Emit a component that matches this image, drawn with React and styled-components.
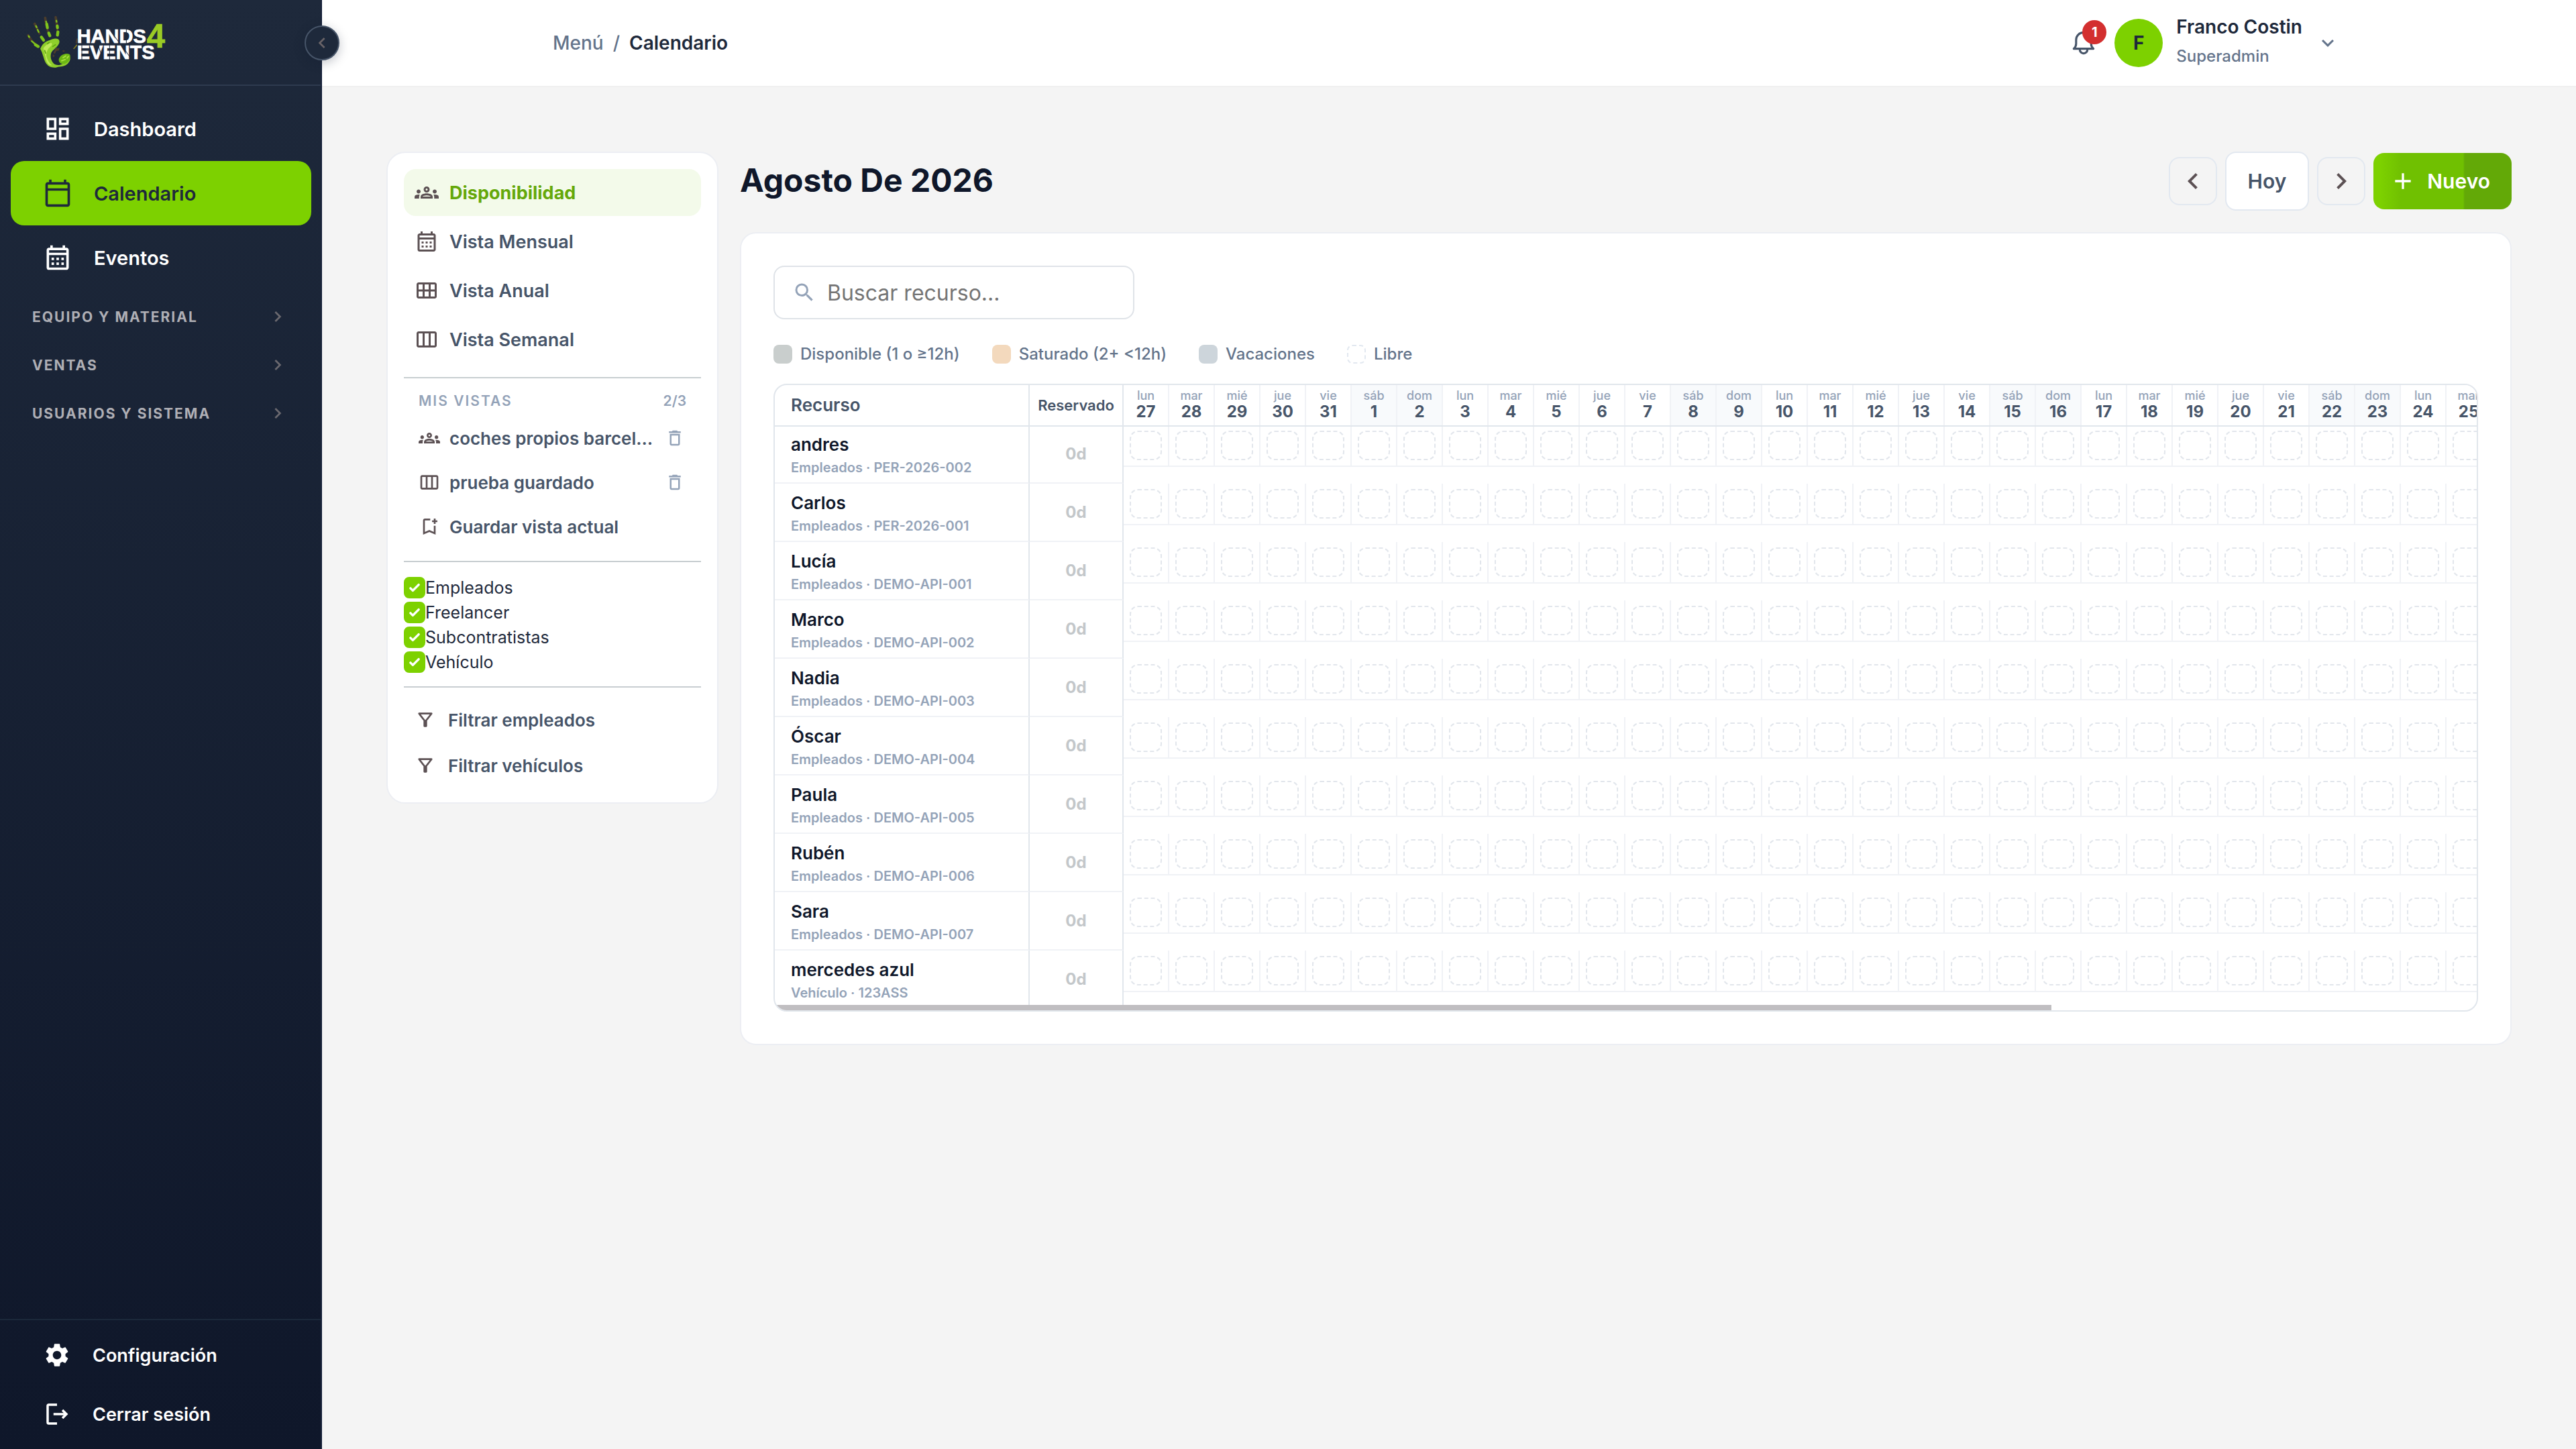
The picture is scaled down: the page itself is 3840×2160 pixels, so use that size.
import React, { useState } from 'react'
import styled, { createGlobalStyle } from 'styled-components'
import {
    MdOutlineDashboard,
    MdOutlineCalendarToday,
    MdOutlineCalendarMonth,
    MdSettings,
    MdChevronLeft,
    MdChevronRight,
    MdKeyboardArrowDown,
    MdOutlineGroups,
    MdOutlineCalendarViewMonth,
    MdOutlineViewWeek,
    MdOutlineBookmarkAdd,
    MdDeleteOutline,
    MdOutlineFilterAlt,
    MdSearch,
    MdAdd,
} from 'react-icons/md'

const mainLinks = [
    { label: 'Dashboard', icon: MdOutlineDashboard },
    { label: 'Calendario', icon: MdOutlineCalendarToday, active: true },
    { label: 'Eventos', icon: MdOutlineCalendarMonth },
]

const sections = ['Equipo y material', 'Ventas', 'Usuarios y sistema']

const views = [
    { label: 'Disponibilidad', icon: MdOutlineGroups },
    { label: 'Vista Mensual', icon: MdOutlineCalendarMonth },
    { label: 'Vista Anual', icon: MdOutlineCalendarViewMonth },
    { label: 'Vista Semanal', icon: MdOutlineViewWeek },
]

const savedViews = [
    { label: 'coches propios barcelona', icon: MdOutlineGroups },
    { label: 'prueba guardado', icon: MdOutlineViewWeek },
]

const types = ['Empleados', 'Freelancer', 'Subcontratistas', 'Vehículo']

const legend = [
    { label: 'Disponible (1 o ≥12h)', color: '#c9cecd' },
    { label: 'Saturado (2+ <12h)', color: '#f3d9bd' },
    { label: 'Vacaciones', color: '#cdd5db' },
    { label: 'Libre' },
]

const resources = [
    { name: 'andres', info: 'Empleados · PER-2026-002' },
    { name: 'Carlos', info: 'Empleados · PER-2026-001' },
    { name: 'Lucía', info: 'Empleados · DEMO-API-001' },
    { name: 'Marco', info: 'Empleados · DEMO-API-002' },
    { name: 'Nadia', info: 'Empleados · DEMO-API-003' },
    { name: 'Óscar', info: 'Empleados · DEMO-API-004' },
    { name: 'Paula', info: 'Empleados · DEMO-API-005' },
    { name: 'Rubén', info: 'Empleados · DEMO-API-006' },
    { name: 'Sara', info: 'Empleados · DEMO-API-007' },
    { name: 'mercedes azul', info: 'Vehículo · 123ASS' },
]

const weekDays = ['dom', 'lun', 'mar', 'mié', 'jue', 'vie', 'sáb']

// the grid starts on the monday before the 1st of august
const days = Array.from({ length: 30 }, (_, i) => {
    const date = new Date(2026, 6, 27 + i)
    return {
        key: i,
        name: weekDays[date.getDay()],
        number: date.getDate(),
        weekend: date.getDay() === 0 || date.getDay() === 6,
    }
})

function Logo() {
    return (
        <svg width="260" height="106" viewBox="0 0 780 318" role="img" aria-label="Hands 4 Events">
            <g fill="none" stroke="#4b3d2c" strokeLinecap="round">
                <path d="M66 128l14 22M95 76l10 20M142 50l4 22M189 47l5 32" strokeWidth="11" />
                <path d="M80 150l30 28M105 96l12 24M150 85l4 26M196 80l1 30" strokeWidth="9" />
                <path d="M285 146l-3 14" strokeWidth="8" />
            </g>
            <g fill="none" stroke="#7fc41c" strokeLinecap="round">
                <path d="M68 131l3 5M82 154l14 12M101 86l3 6M108 103l5 10M146 66l2 8M192 62l1 6" strokeWidth="7" />
                <path d="M98 170l13 8M125 136l10 14M149 78l3 16M158 118l5 12M196 86l1 8M199 113l-2 14" strokeWidth="13" />
            </g>
            <path d="M120 188c8-18 22-34 42-38 14-8 30-10 40-4 8 10 2 22-6 30-8 12-24 18-28 34-4 18 2 34 14 46 12 8 26 6 40-2 18-2 26-14 30-30 6 10-2 26-16 36-16 10-34 6-46 12-20 2-34-4-42-16-12-16-16-48-28-68z" fill="#8fce2b" />
            <path d="M134 186c10-14 22-24 36-24 8 8-4 16-12 24-10 12-14 30-8 44 6 16 14 24 22 32-14 2-22-10-26-24-4-20-8-36-12-52z" fill="#bfe85a" />
            <path d="M206 248c-8-12 0-26 16-34 14-6 30-6 32 4 2 16-8 30-22 36-10 4-20 2-26-6z" fill="#6cb714" />
            <path d="M222 228l12-8M216 242l16-6M240 230l6-8" stroke="#a9e03e" strokeWidth="6" strokeLinecap="round" />
            <path d="M152 166l8-6M176 178l12-8M140 196l4 12" stroke="#5fa50f" strokeWidth="5" strokeLinecap="round" />
            <path d="M188 182l10 4 8-2-2 12-12 2-6 12-8-2 6-12zM176 214l8 2-2 10-6-2zM220 196l10 0-2 6-8-1z" fill="#4b3d2c" />
            <path d="M267 188l16-20 2 6-14 16z" fill="#8b8320" />
            <g fontFamily="'Liberation Sans', Arial, sans-serif" fontWeight="700">
                <text x="284" y="161" fontSize="87" fill="#ffffff" stroke="#ffffff" strokeWidth="2">HANDS</text>
                <text x="284" y="235" fontSize="87" fill="#ffffff" stroke="#ffffff" strokeWidth="2">EVENTS</text>
                <text x="596" y="184" fontSize="148" fill="#9acb25" stroke="#9acb25" strokeWidth="2">4</text>
            </g>
            {/* stencil cuts */}
            <path
                d="M306 96v26M306 134v30M426 98l50 66M505 95v70M306 170v70M380 174l20 62M430 170v70M484 172l46 66M575 170v14"
                stroke="#1d293c"
                strokeWidth="3"
            />
        </svg>
    )
}

function LogoutIcon() {
    return (
        <svg width="42" height="42" viewBox="0 0 24 24" fill="none" stroke="currentColor" strokeWidth="2" aria-hidden="true">
            <path d="M12 4H5a1 1 0 0 0-1 1v14a1 1 0 0 0 1 1h7" />
            <path d="M9 12h10" />
            <path d="M16.600 8.600L20 12l-3.400 3.400" />
        </svg>
    )
}

function BellIcon() {
    return (
        <svg width="44" height="44" viewBox="0 0 24 24" fill="none" stroke="currentColor" strokeWidth="1.700" strokeLinecap="round" strokeLinejoin="round" aria-hidden="true">
            <path d="M4 16.700h16c-1.100-1-1.900-2.200-1.900-4V9.600a6.100 6.100 0 0 0-12.200 0v3.100c0 1.800-.8 3-1.900 4z" />
            <path d="M8.900 17.400a3.100 3.100 0 0 0 6.200 0" />
        </svg>
    )
}

function Sidebar() {
    return (
        <Aside>
            <Brand>
                <Logo />
                <Collapse type="button" aria-label="Contraer menú">
                    <MdChevronLeft size={32} />
                </Collapse>
            </Brand>
            <Nav>
                {mainLinks.map(({ label, icon: Icon, active }) => (
                    <NavLink key={label} href="#" $active={active}>
                        <Icon size={44} />
                        {label}
                    </NavLink>
                ))}
                <Sections>
                    {sections.map((label) => (
                        <SectionButton key={label} type="button">
                            {label}
                            <MdChevronRight size={32} />
                        </SectionButton>
                    ))}
                </Sections>
            </Nav>
            <AsideFooter>
                <FooterLink href="#">
                    <MdSettings size={42} />
                    Configuración
                </FooterLink>
                <FooterLink href="#">
                    <LogoutIcon />
                    Cerrar sesión
                </FooterLink>
            </AsideFooter>
        </Aside>
    )
}

function Header() {
    return (
        <TopBar>
            <Breadcrumb aria-label="Ruta">
                <a href="#">Menú</a>
                <span>/</span>
                <strong>Calendario</strong>
            </Breadcrumb>
            <UserArea>
                <BellButton type="button" aria-label="Notificaciones">
                    <BellIcon />
                    <Badge>1</Badge>
                </BellButton>
                <UserButton type="button">
                    <Avatar>F</Avatar>
                    <UserText>
                        <UserName>Franco Costin</UserName>
                        <UserRole>Superadmin</UserRole>
                    </UserText>
                    <MdKeyboardArrowDown size={36} />
                </UserButton>
            </UserArea>
        </TopBar>
    )
}

function ViewsPanel() {
    const [view, setView] = useState('Disponibilidad')
    const [checked, setChecked] = useState(types)

    const toggle = (type) =>
        setChecked(checked.includes(type) ? checked.filter((t) => t !== type) : [...checked, type])

    return (
        <Panel>
            <ViewList>
                {views.map(({ label, icon: Icon }) => (
                    <ViewButton key={label} type="button" $active={view === label} onClick={() => setView(label)}>
                        <Icon size={36} />
                        <span>{label}</span>
                    </ViewButton>
                ))}
            </ViewList>
            <Divider />
            <SavedHead>
                <SavedTitle>Mis vistas</SavedTitle>
                <span>2/3</span>
            </SavedHead>
            <SavedList>
                {savedViews.map(({ label, icon: Icon }) => (
                    <SavedRow key={label}>
                        <SavedButton type="button">
                            <Icon size={32} />
                            <span>{label}</span>
                        </SavedButton>
                        <DeleteButton type="button" aria-label={'Eliminar ' + label}>
                            <MdDeleteOutline size={30} />
                        </DeleteButton>
                    </SavedRow>
                ))}
                <SavedRow>
                    <SavedButton type="button">
                        <MdOutlineBookmarkAdd size={32} />
                        <span>Guardar vista actual</span>
                    </SavedButton>
                </SavedRow>
            </SavedList>
            <Divider />
            <TypeList>
                {types.map((type) => (
                    <TypeLabel key={type}>
                        <Check type="checkbox" checked={checked.includes(type)} onChange={() => toggle(type)} />
                        {type}
                    </TypeLabel>
                ))}
            </TypeList>
            <Divider />
            <FilterList>
                <FilterButton type="button">
                    <MdOutlineFilterAlt size={32} />
                    Filtrar empleados
                </FilterButton>
                <FilterButton type="button">
                    <MdOutlineFilterAlt size={32} />
                    Filtrar vehículos
                </FilterButton>
            </FilterList>
        </Panel>
    )
}

function ResourceTable() {
    return (
        <TableFrame>
            <Table>
                <colgroup>
                    <NameCol />
                    <CountCol />
                    {days.map((day) => (
                        <DayCol key={day.key} />
                    ))}
                </colgroup>
                <thead>
                    <tr>
                        <HeadCell scope="col">Recurso</HeadCell>
                        <HeadCell scope="col" $small>
                            Reservado
                        </HeadCell>
                        {days.map((day) => (
                            <DayHead key={day.key} scope="col" $weekend={day.weekend}>
                                <DayName>{day.name}</DayName>
                                <DayNumber>{day.number}</DayNumber>
                            </DayHead>
                        ))}
                    </tr>
                </thead>
                <tbody>
                    {resources.map((resource) => (
                        <tr key={resource.name}>
                            <NameCell scope="row">
                                <ResourceName>{resource.name}</ResourceName>
                                <ResourceInfo>{resource.info}</ResourceInfo>
                            </NameCell>
                            <CountCell>0d</CountCell>
                            {days.map((day) => (
                                <DayCell key={day.key}>
                                    <Slot>
                                        <FreeBox />
                                    </Slot>
                                </DayCell>
                            ))}
                        </tr>
                    ))}
                </tbody>
            </Table>
            <ScrollThumb />
        </TableFrame>
    )
}

function App() {
    return (
        <Page>
            <GlobalStyle />
            <Sidebar />
            <Main>
                <Header />
                <Content>
                    <ViewsPanel />
                    <Calendar>
                        <TitleRow>
                            <Title>Agosto De 2026</Title>
                            <Controls>
                                <ArrowButton type="button" aria-label="Anterior">
                                    <MdChevronLeft size={48} />
                                </ArrowButton>
                                <TodayButton type="button">Hoy</TodayButton>
                                <ArrowButton type="button" aria-label="Siguiente">
                                    <MdChevronRight size={48} />
                                </ArrowButton>
                                <NewButton type="button">
                                    <MdAdd size={40} />
                                    Nuevo
                                </NewButton>
                            </Controls>
                        </TitleRow>
                        <Card>
                            <SearchBox>
                                <MdSearch size={36} />
                                <input type="text" placeholder="Buscar recurso..." aria-label="Buscar recurso" />
                            </SearchBox>
                            <Legend>
                                {legend.map(({ label, color }) => (
                                    <LegendItem key={label}>
                                        <Swatch $color={color} />
                                        {label}
                                    </LegendItem>
                                ))}
                            </Legend>
                            <ResourceTable />
                        </Card>
                    </Calendar>
                </Content>
            </Main>
        </Page>
    )
}

const GlobalStyle = createGlobalStyle`
    *, *::before, *::after {
        box-sizing: border-box;
    }

    body {
        margin: 0;
        background: #f4f4f4;
        font-family: Inter, 'Liberation Sans', sans-serif;
        color: #1e293b;
    }

    a {
        color: inherit;
        text-decoration: none;
    }

    button, input {
        font: inherit;
        color: inherit;
    }

    button {
        padding: 0;
        border: 0;
        background: none;
        cursor: pointer;
    }

    svg {
        flex: none;
    }
`

const Page = styled.div`
    display: flex;
    min-height: 100vh;
`

const Aside = styled.aside`
    flex: none;
    display: flex;
    flex-direction: column;
    width: 480px;
    border-right: 2px solid #17223a;
    background: linear-gradient(180deg, #1e293b 0%, #0f172a 100%);
`

const Brand = styled.div`
    position: relative;
    display: flex;
    align-items: center;
    height: 128px;
    padding-left: 20px;
    border-bottom: 2px solid #2e3a4f;
`

const Collapse = styled.button`
    position: absolute;
    top: 38px;
    right: -28px;
    z-index: 1;
    display: flex;
    align-items: center;
    justify-content: center;
    width: 52px;
    height: 52px;
    border: 2px solid #475569;
    border-radius: 50%;
    background: #1e293b;
    color: #6a6468;
    box-shadow: 0 4px 16px rgba(15, 23, 42, 0.25);
`

const Nav = styled.nav`
    flex: 1;
    display: flex;
    flex-direction: column;
    padding: 16px 14px 16px 16px;
`

const NavLink = styled.a`
    display: flex;
    align-items: center;
    gap: 32px;
    height: 96px;
    padding: 0 48px;
    border-radius: 20px;
    background: ${props => props.$active ? '#7dd100' : 'transparent'};
    color: ${props => props.$active ? '#1e293b' : '#ffffff'};
    font-size: 29px;
    font-weight: 600;
`

const Sections = styled.div`
    display: flex;
    flex-direction: column;
    padding-top: 4px;
`

const SectionButton = styled.button`
    display: flex;
    align-items: center;
    justify-content: space-between;
    height: 72px;
    padding: 0 34px 0 32px;
    color: #afafb5;
    font-size: 21px;
    font-weight: 700;
    letter-spacing: 2px;
    text-transform: uppercase;

    svg {
        color: #6b696f;
    }
`

const AsideFooter = styled.div`
    display: flex;
    flex-direction: column;
    padding: 8px 16px;
    border-top: 2px solid #1b283a;
`

const FooterLink = styled.a`
    display: flex;
    align-items: center;
    gap: 32px;
    height: 88px;
    padding: 0 48px;
    color: #ffffff;
    font-size: 27px;
    font-weight: 600;
`

const Main = styled.main`
    flex: 1;
    min-width: 0;
`

const TopBar = styled.header`
    display: flex;
    align-items: center;
    justify-content: space-between;
    height: 130px;
    padding: 0 352px 0 344px;
    border-bottom: 2px solid #f0f0f0;
    background: #ffffff;
`

const Breadcrumb = styled.nav`
    display: flex;
    gap: 14px;
    color: #64748b;
    font-size: 28px;
    font-weight: 500;

    strong {
        color: #1e293b;
        font-weight: 600;
    }
`

const UserArea = styled.div`
    display: flex;
    align-items: center;
    gap: 24px;
`

const BellButton = styled.button`
    position: relative;
    display: flex;
    color: #475569;
`

const Badge = styled.span`
    position: absolute;
    top: -12px;
    right: -12px;
    width: 36px;
    height: 36px;
    border-radius: 50%;
    background: #d32f2f;
    color: #ffffff;
    font-size: 20px;
    font-weight: 700;
    line-height: 36px;
    text-align: center;
`

const UserButton = styled.button`
    display: flex;
    align-items: center;
    gap: 20px;
    color: #64748b;
`

const Avatar = styled.span`
    width: 72px;
    height: 72px;
    border-radius: 50%;
    background: #7dd100;
    color: #1e293b;
    font-size: 28px;
    font-weight: 700;
    line-height: 72px;
    text-align: center;
`

const UserText = styled.span`
    display: flex;
    flex-direction: column;
    gap: 6px;
    padding-bottom: 6px;
    text-align: left;
`

const UserName = styled.span`
    color: #1e293b;
    font-size: 28px;
    font-weight: 600;
    line-height: 40px;
`

const UserRole = styled.span`
    font-size: 24px;
    font-weight: 500;
    line-height: 36px;
`

const Content = styled.div`
    display: grid;
    grid-template-columns: 495px minmax(0, 1fr);
    align-items: start;
    gap: 32px;
    padding: 96px;
`

const Panel = styled.aside`
    padding: 24px;
    border: 2px solid #eceef3;
    border-radius: 28px;
    background: #ffffff;
    color: #475569;
`

const ViewList = styled.div`
    display: flex;
    flex-direction: column;
    gap: 3px;
    margin-bottom: 21px;
`

const ViewButton = styled.button`
    display: flex;
    align-items: center;
    gap: 16px;
    height: 70px;
    padding: 0 16px;
    border-radius: 18px;
    background: ${props => props.$active ? '#f3faea' : 'transparent'};
    color: ${props => props.$active ? '#65a80a' : '#475569'};
    font-size: 27px;
    font-weight: ${props => props.$active ? 700 : 600};

    svg {
        color: #5c5154;
    }
`

const Divider = styled.hr`
    height: 2px;
    margin: 0;
    border: 0;
    background: #c8ced1;
`

const SavedHead = styled.div`
    display: flex;
    align-items: center;
    justify-content: space-between;
    height: 46px;
    margin-top: 10px;
    padding: 0 22px;
    color: #94a3b8;
    font-size: 21px;
    font-weight: 600;
`

const SavedTitle = styled.span`
    letter-spacing: 2px;
    text-transform: uppercase;
`

const SavedList = styled.div`
    padding-bottom: 18px;
`

const SavedRow = styled.div`
    display: flex;
    align-items: center;
    gap: 16px;
    height: 66px;
    padding: 0 24px 0 22px;
`

const SavedButton = styled.button`
    flex: 1;
    min-width: 0;
    display: flex;
    align-items: center;
    gap: 14px;
    font-size: 26px;
    font-weight: 600;
    text-align: left;

    svg {
        color: #5c5154;
    }

    span {
        overflow: hidden;
        text-overflow: ellipsis;
        white-space: nowrap;
    }
`

const DeleteButton = styled.button`
    display: flex;
    color: #94a3b8;
`

const TypeList = styled.div`
    display: flex;
    flex-direction: column;
    gap: 5px;
    padding: 22px 0 20px;
`

const TypeLabel = styled.label`
    display: flex;
    align-items: center;
    height: 32px;
    color: #1e293b;
    font-size: 25px;
`

const Check = styled.input`
    appearance: none;
    flex: none;
    width: 32px;
    height: 32px;
    margin: 0;
    border: 2px solid #7dd100;
    border-radius: 8px;
    background: #ffffff;

    &:checked {
        background: #7dd100 url("data:image/svg+xml,%3Csvg xmlns='http://www.w3.org/2000/svg' viewBox='0 0 16 16' fill='%23fff'%3E%3Cpath d='M12.207 4.793a1 1 0 010 1.414l-5 5a1 1 0 01-1.414 0l-2-2a1 1 0 011.414-1.414L6.500 9.086l4.293-4.293a1 1 0 011.414 0z'/%3E%3C/svg%3E") center / 28px no-repeat;
    }
`

const FilterList = styled.div`
    display: flex;
    flex-direction: column;
    gap: 6px;
    padding-top: 17px;
`

const FilterButton = styled.button`
    display: flex;
    align-items: center;
    gap: 18px;
    height: 62px;
    padding: 0 16px;
    font-size: 26px;
    font-weight: 600;

    svg {
        color: #5c5154;
    }
`

const Calendar = styled.section`
    display: flex;
    flex-direction: column;
    gap: 32px;
`

const TitleRow = styled.div`
    display: flex;
    align-items: center;
    justify-content: space-between;
    height: 88px;
`

const Title = styled.h1`
    margin: 0;
    padding-bottom: 4px;
    color: #0f172a;
    font-size: 48px;
    font-weight: 700;
`

const Controls = styled.div`
    display: flex;
    align-items: center;
    gap: 12px;
`

const ArrowButton = styled.button`
    display: flex;
    align-items: center;
    justify-content: center;
    width: 72px;
    height: 72px;
    border: 2px solid #e2e8f0;
    border-radius: 16px;
    color: #5c5154;
`

const TodayButton = styled.button`
    height: 88px;
    padding: 0 32px;
    border: 2px solid #e2e8f0;
    border-radius: 16px;
    background: #ffffff;
    color: #475569;
    font-size: 30px;
    font-weight: 600;
`

const NewButton = styled.button`
    display: flex;
    align-items: center;
    gap: 16px;
    height: 84px;
    padding: 0 32px 0 24px;
    border-radius: 16px;
    background: linear-gradient(90deg, #7dd100 5%, #70c001 20%, #70c001 65%, #63a907 66%);
    color: #ffffff;
    font-size: 30px;
    font-weight: 600;
`

const Card = styled.div`
    padding: 48px;
    border: 2px solid #eceef3;
    border-radius: 24px;
    background: #ffffff;
`

const SearchBox = styled.label`
    display: flex;
    align-items: center;
    gap: 16px;
    width: 538px;
    height: 80px;
    padding: 0 26px;
    border: 2px solid #dfe3e8;
    border-radius: 16px;
    color: #94a3b8;

    input {
        flex: 1;
        min-width: 0;
        padding: 0;
        border: 0;
        outline: 0;
        background: none;
        color: #1e293b;
        font-size: 32px;
    }

    input::placeholder {
        color: #757575;
    }
`

const Legend = styled.div`
    display: flex;
    flex-wrap: wrap;
    gap: 48px;
    margin: 36px 0 28px;
`

const LegendItem = styled.span`
    display: flex;
    align-items: center;
    gap: 12px;
    color: #64748b;
    font-size: 24px;
    font-weight: 500;
    line-height: 32px;
`

const Swatch = styled.span`
    width: 28px;
    height: 28px;
    border: ${props => props.$color ? '0' : '2px dashed #e2e8f0'};
    border-radius: 8px;
    background: ${props => props.$color || '#ffffff'};
`

const TableFrame = styled.div`
    position: relative;
    overflow: hidden;
    padding-bottom: 2px;
    border: 2px solid #e1e6ec;
    border-radius: 20px;
`

const Table = styled.table`
    width: 2560px;
    table-layout: fixed;
    border-collapse: separate;
    border-spacing: 0;
`

const NameCol = styled.col`
    width: 380px;
`

const CountCol = styled.col`
    width: 140px;
`

const DayCol = styled.col`
    width: 68px;
`

const HeadCell = styled.th`
    position: relative;
    height: 60px;
    padding: ${props => props.$small ? '0' : '0 24px 2px'};
    border-right: 2px solid #e1e6ec;
    box-shadow: 0 2px 0 #e1e6ec;
    color: #475569;
    font-size: ${props => props.$small ? '22px' : '26px'};
    font-weight: 600;
    text-align: ${props => props.$small ? 'center' : 'left'};
`

const DayHead = styled.th`
    position: relative;
    height: 60px;
    padding: 4px 0 0;
    border-right: 2px solid #f0f2f6;
    box-shadow: 0 2px 0 #e1e6ec;
    background: ${props => props.$weekend ? '#f8fafc' : '#ffffff'};
    vertical-align: top;
    text-align: center;
`

const DayName = styled.div`
    color: #94a3b8;
    font-size: 18px;
    font-weight: 500;
    line-height: 24px;
`

const DayNumber = styled.div`
    color: #475569;
    font-size: 24px;
    font-weight: 700;
    line-height: 24px;
`

const NameCell = styled.th`
    height: 87px;
    padding: 9px 24px 0;
    border-right: 2px solid #e1e6ec;
    border-bottom: 2px solid #f0f2f6;
    vertical-align: top;
    text-align: left;
`

const ResourceName = styled.div`
    color: #0f172a;
    font-size: 26px;
    font-weight: 600;
    line-height: 40px;
`

const ResourceInfo = styled.div`
    color: #94a3b8;
    font-size: 20px;
    font-weight: 600;
    line-height: 28px;
`

const CountCell = styled.td`
    padding: 0;
    border-right: 2px solid #e1e6ec;
    border-bottom: 2px solid #f0f2f6;
    color: #c3c7ca;
    font-size: 24px;
    font-weight: 700;
    text-align: center;
`

const DayCell = styled.td`
    padding: 0;
    vertical-align: top;
`

const Slot = styled.div`
    display: flex;
    justify-content: center;
    height: 62px;
    padding-top: 8px;
    border-right: 2px solid #f0f2f6;
    border-bottom: 2px solid #f0f2f6;
`

const FreeBox = styled.div`
    width: 48px;
    height: 44px;
    border: 2px dashed #e2e6ec;
    border-radius: 12px;
`

const ScrollThumb = styled.div`
    position: absolute;
    left: 0;
    bottom: 0;
    width: 75%;
    height: 8px;
    background: #c0bec1;
`

export default App
